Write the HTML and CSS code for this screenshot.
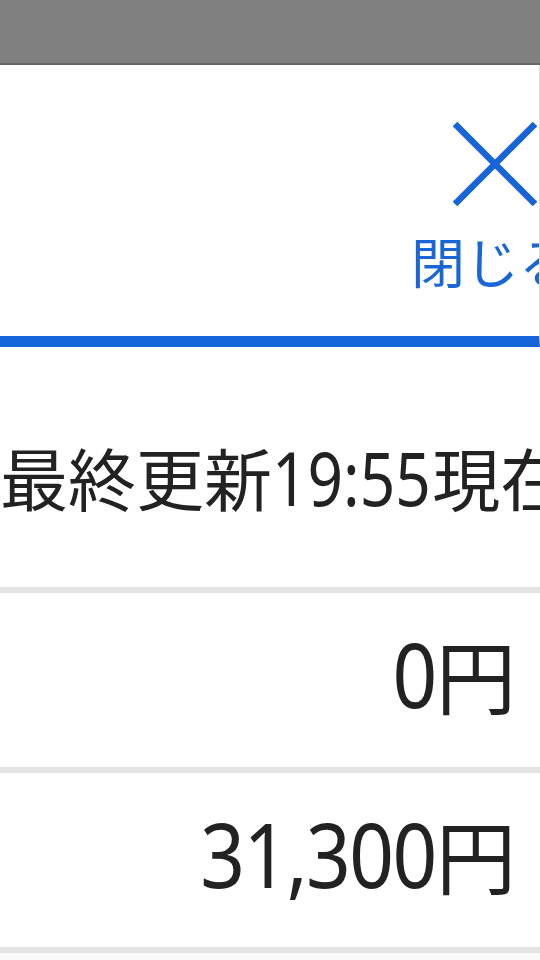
FILE: index.html
```html
<!DOCTYPE html>
<html lang="ja">
<head>
<meta charset="utf-8">
<title>料金</title>
<link rel="stylesheet" href="styles.css">
</head>
<body>
<div class="topbar"></div>
<header class="head">
  <button class="close" type="button">
    <svg class="close-icon" width="86" height="86" viewBox="0 0 86 86" aria-hidden="true">
      <path d="M3 3 L83 83 M83 3 L3 83" fill="none" stroke="currentColor" stroke-width="6.5" stroke-linecap="butt"/>
    </svg>
    <span class="close-label">閉じる</span>
  </button>
</header>
<section class="updated">
  <p class="updated-text">最終更新<span class="num num-small">19:55</span>現在</p>
</section>
<ul class="amounts">
  <li class="amount-row"><span class="num num-big">0</span><span class="yen">円</span></li>
  <li class="amount-row"><span class="num num-big">31,300</span><span class="yen">円</span></li>
</ul>
<div class="rest"></div>
</body>
</html>
```
FILE: styles.css
```css
html, body {
  margin: 0;
  padding: 0;
}
body {
  width: 540px;
  height: 960px;
  overflow: hidden;
  background: #ffffff;
  color: #222222;
  font-family: "Noto Sans CJK JP", "Noto Sans", sans-serif;
}
.topbar {
  height: 63px;
  background: #808080;
  border-bottom: 2px solid #666666;
}
.head {
  box-sizing: border-box;
  height: 282px;
  display: flex;
  justify-content: flex-end;
  align-items: flex-start;
  padding-top: 56px;
  border-right: 1px solid #dddddd;
  border-bottom: 11px solid #1565d8;
  overflow: hidden;
}
.close {
  flex: none;
  display: flex;
  flex-direction: column;
  align-items: center;
  margin: 0 -34px 0 0;
  padding: 0;
  border: 0;
  background: none;
  color: #1565d8;
  font: inherit;
}
.close-icon {
  display: block;
}
.close-label {
  display: block;
  margin-top: 27px;
  margin-left: -6px;
  font-size: 54px;
  line-height: 1;
  white-space: nowrap;
  color: #1a66d6;
}
.updated {
  box-sizing: border-box;
  height: 240px;
  padding-top: 96px;
}
.updated-text {
  margin: 0;
  font-size: 68px;
  line-height: 1;
  white-space: nowrap;
}
.num {
  display: inline-block;
  font-family: "Noto Sans", "Open Sans", sans-serif;
  line-height: 0;
}
.num-small {
  font-size: 74px;
  transform: scaleX(0.84);
  transform-origin: left center;
  margin-right: -0.39em;
}
.amounts {
  list-style: none;
  margin: 0;
  padding: 0;
}
.amount-row {
  box-sizing: border-box;
  height: 180px;
  border-top: 6px solid #e4e4e4;
  padding: 40px 24px 0 0;
  text-align: right;
  font-size: 80px;
  line-height: 1;
  white-space: nowrap;
}
.amount-row:last-child {
  border-bottom: 6px solid #e4e4e4;
  height: 186px;
}
.num-big {
  font-size: 90px;
  letter-spacing: -0.02em;
  transform: scaleX(0.87);
  transform-origin: right center;
}
.rest {
  height: 20px;
  background: #fafafa;
}
```
